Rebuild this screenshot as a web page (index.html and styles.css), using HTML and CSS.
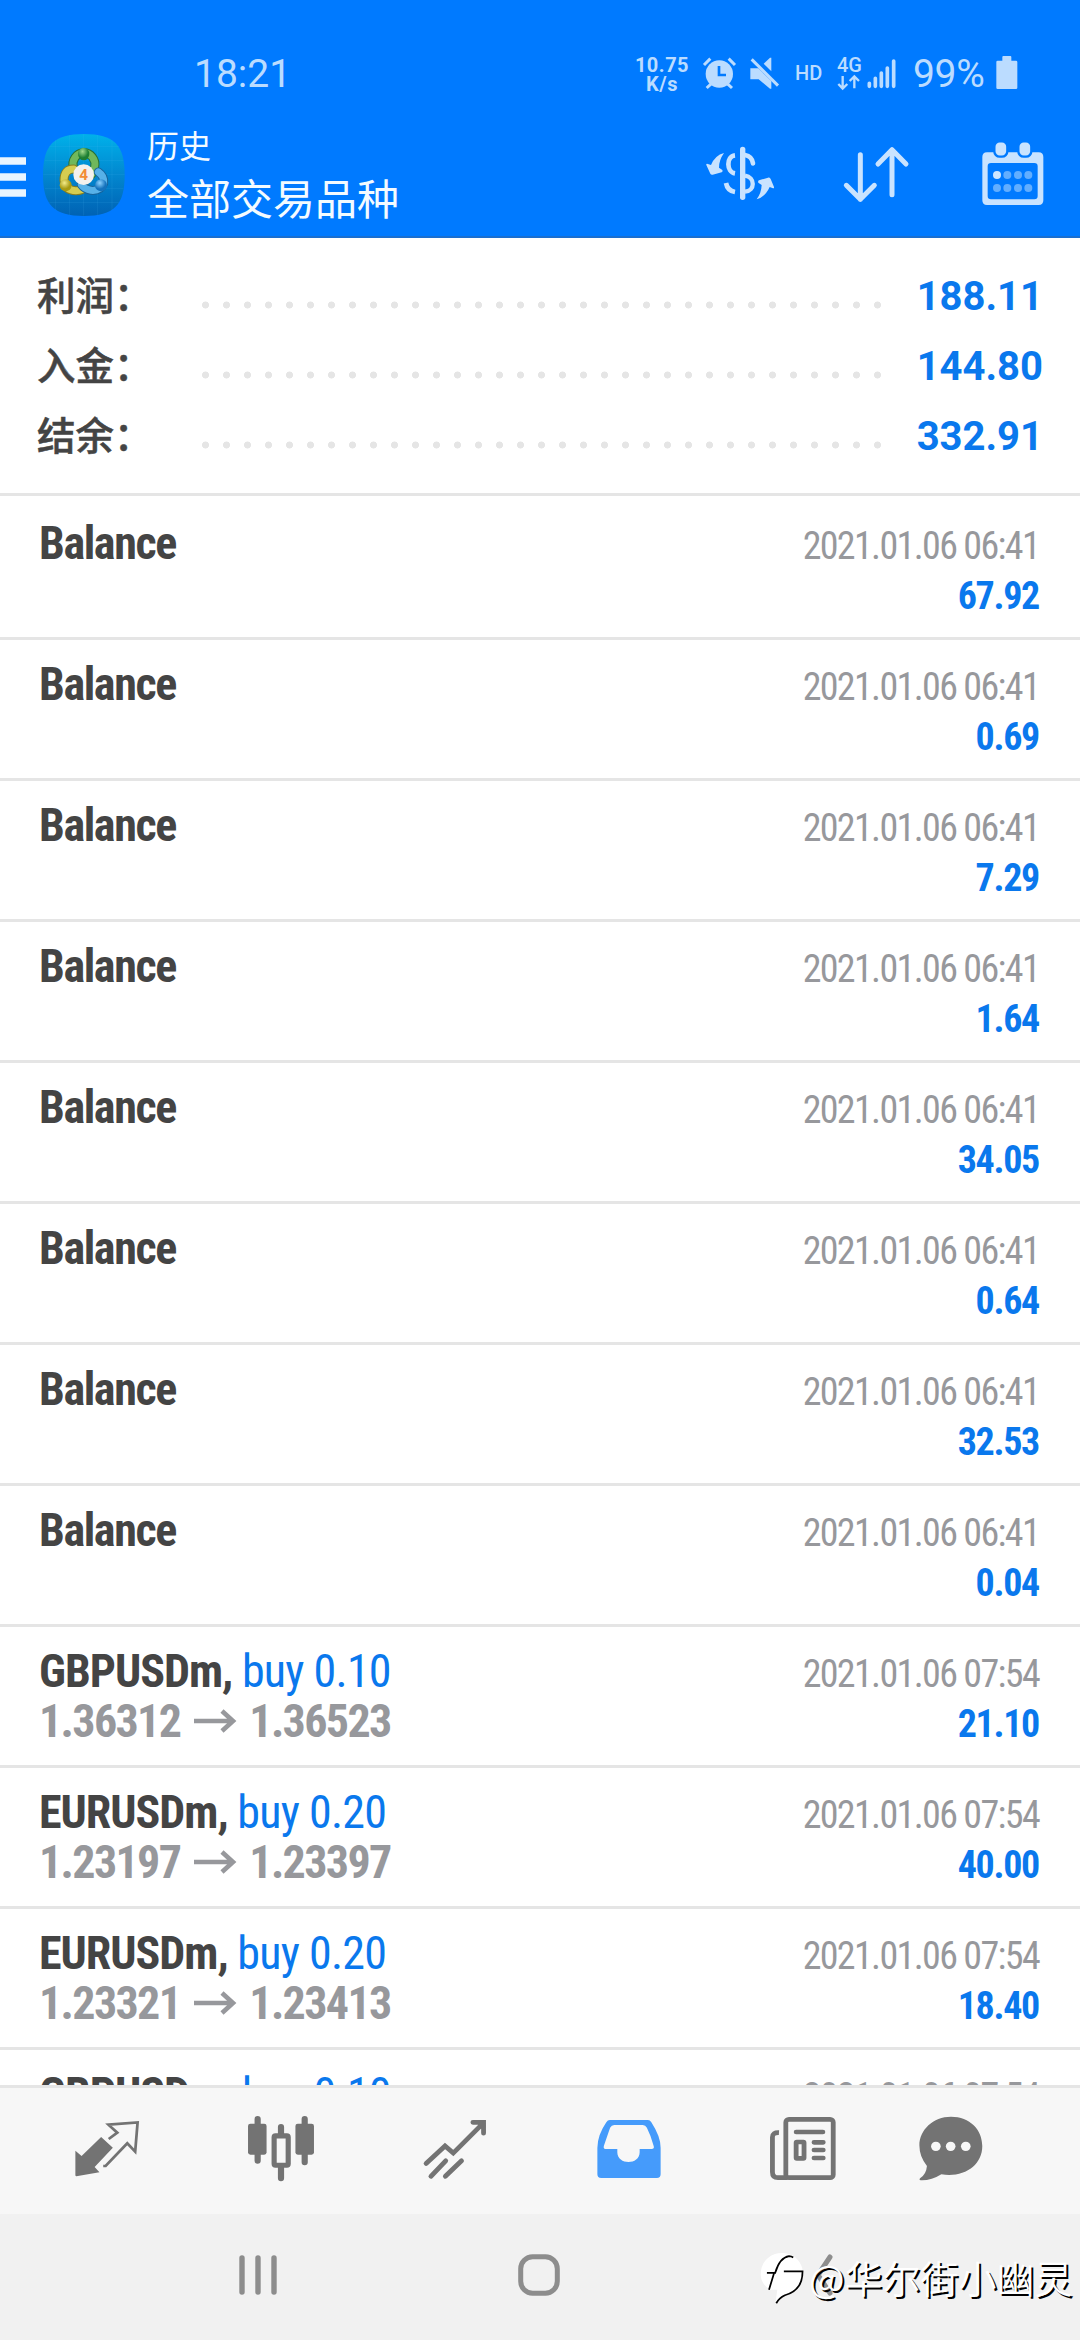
FILE: index.html
```html
<!DOCTYPE html>
<html lang="zh-CN">
<head>
<meta charset="utf-8">
<title>历史</title>
<link rel="stylesheet" href="styles.css">
</head>
<body>
<div class="screen">
  <header class="top">
    <div class="status">
      <span class="clock">18:21</span>
      <div class="indicators">
        <div class="speed"><span>10.75</span><span>K/s</span></div>
        <svg class="alarm" width="34" height="32" viewBox="305 82 102 96"><g fill="none" stroke="#bbdcff" stroke-width="9"><path d="M308 106L327 87M401 106L382 87M331 161L316 175M377 161L392 175"/></g><circle cx="354" cy="133" r="41" fill="#bbdcff"/><path d="M353 109V136H374" fill="none" stroke="#007aff" stroke-width="8"/></svg>
        <svg class="mute" width="30" height="32" viewBox="448 82 90 96"><path d="M449 116H473L512 154V177H508L474 149H449Z" fill="#bbdcff"/><path d="M512 84V125L489 102L508 84Z" fill="#bbdcff"/><path d="M453 89L532 168" stroke="#bbdcff" stroke-width="9"/></svg>
        <span class="hd">HD</span>
        <div class="net"><span>4G</span><svg width="24" height="16" viewBox="713 135 72 48"><path d="M730 138V176M717 162L730 176L744 162M765 175V140M751 153L765 139L779 153" fill="none" stroke="#bbdcff" stroke-width="7"/></svg></div>
        <svg class="signal" width="30" height="30" viewBox="805 88 90 90"><path d="M812 161V170M830 146V170M848 130V170M866 115V170M885 94V170" stroke="#bbdcff" stroke-width="11" stroke-linecap="round"/></svg>
        <span class="pct">99%</span>
        <svg class="battery" width="22" height="34" viewBox="1187 78 66 102"><path d="M1206 81Q1206 78 1209 78H1230Q1233 78 1233 81V92H1247Q1251 92 1251 96V173Q1251 177 1247 177H1192Q1188 177 1188 173V96Q1188 92 1192 92H1206Z" fill="#bbdcff"/></svg>
      </div>
    </div>
    <div class="appbar">
      <svg class="menu" width="26" height="40" viewBox="0 0 26 40"><path d="M0 4H26M0 20H26M0 36H26" stroke="#e9f5ff" stroke-width="7.4"/></svg>
      <svg class="logo" width="84" height="84" viewBox="36 39 252 252">
        <defs>
          <linearGradient id="bg" x1="0" y1="0" x2="0" y2="1"><stop offset="0" stop-color="#00b1ea"/><stop offset=".5" stop-color="#0287cf"/><stop offset="1" stop-color="#0062b4"/></linearGradient>
          <radialGradient id="gn" cx=".4" cy=".3"><stop offset="0" stop-color="#a5dc8c"/><stop offset="1" stop-color="#1d7f32"/></radialGradient>
          <radialGradient id="ye" cx=".4" cy=".3"><stop offset="0" stop-color="#f3eb89"/><stop offset="1" stop-color="#a79a12"/></radialGradient>
          <radialGradient id="bl" cx=".4" cy=".3"><stop offset="0" stop-color="#8dd2ff"/><stop offset="1" stop-color="#1472bd"/></radialGradient>
        </defs>
        <path d="M162 42C252 42 284 74 284 165S252 288 162 288S39 256 39 165S72 42 162 42Z" fill="url(#bg)"/>
        <path d="M77 60V270M119 45V285M161 43V287M203 45V285M246 60V270M58 80H267M44 122H280M40 164H284M44 206H280M58 248H267" stroke="#53baf0" stroke-opacity=".2" stroke-width="2"/>
        <g fill="none" stroke-linecap="round">
          <path d="M130 143A33 35 0 1 1 194 141Q192 156 182 166" stroke="#286f35" stroke-width="27"/>
          <path d="M130 143A33 35 0 1 1 194 141Q192 156 182 166" stroke="#70b85b" stroke-width="21"/>
          <path d="M131 147Q102 147 102 181Q106 212 138 212Q156 212 164 202" stroke="#857d20" stroke-width="27"/>
          <path d="M131 147Q102 147 102 181Q106 212 138 212Q156 212 164 202" stroke="#d6cd50" stroke-width="21"/>
          <path d="M205 156Q224 169 221 190Q212 213 184 211Q163 207 154 194" stroke="#17639a" stroke-width="27"/>
          <path d="M205 156Q224 169 221 190Q212 213 184 211Q163 207 154 194" stroke="#57b1e8" stroke-width="21"/>
        </g>
        <ellipse cx="161" cy="102" rx="17" ry="19" fill="url(#gn)"/><circle cx="107" cy="196" r="18" fill="url(#ye)"/><circle cx="213" cy="196" r="18" fill="url(#bl)"/>
        <circle cx="161" cy="164" r="31" fill="#f4f1ed"/><text x="161" y="181" text-anchor="middle" class="four">4</text>
      </svg>
      <div class="titles"><span class="small">历史</span><span class="large">全部交易品种</span></div>
      <svg class="act currency" width="70" height="56" viewBox="315 348 210 168" fill="none" stroke="#c9e3ff" stroke-width="14">
        <path d="M428 358V502" stroke-width="16" stroke-linecap="round"/><path d="M405 376C378 379 379 426 405 430M378 459Q382 482 405 486"/><path d="M435 375Q456 379 459 400" stroke-linecap="round"/><path d="M435 437C466 442 466 482 435 485" stroke-width="13"/>
        <path d="M372 369Q345 376 333 405L321 401Q318 401 319 405L331 431Q333 435 338 434L365 427Q369 425 367 420L357 413Q357 390 372 369ZM470 508Q496 500 509 471L519 475Q523 475 522 471L512 447Q509 442 504 443L477 451Q473 453 475 458L485 465Q484 489 470 508Z" fill="#c9e3ff" stroke="none"/>
      </svg>
      <svg class="act sort" width="66" height="58" viewBox="729 348 198 174"><path d="M781 374V508M739 466L781 508L823 466M876 494V359M834 402L876 359L918 402" fill="none" stroke="#c9e3ff" stroke-width="15" stroke-linecap="round" stroke-linejoin="round"/></svg>
      <svg class="act" width="62" height="64" viewBox="1145 335 186 192"><path fill-rule="evenodd" d="M1160 366H1315Q1329 366 1329 380V510Q1329 524 1315 524H1160Q1146 524 1146 510V380Q1146 366 1160 366ZM1172 398Q1162 398 1162 408V497Q1162 507 1172 507H1302Q1312 507 1312 497V408Q1312 398 1302 398Z" fill="#c9e3ff"/><g fill="#c9e3ff" stroke="#007aff" stroke-width="7"><rect x="1182" y="333" width="39" height="46" rx="16"/><rect x="1254" y="333" width="39" height="46" rx="16"/></g><g fill="#62aeff"><circle cx="1190" cy="434" r="12" fill="#cee6ff"/><circle cx="1221" cy="434" r="12"/><circle cx="1253" cy="434" r="12"/><circle cx="1284" cy="434" r="12"/><circle cx="1190" cy="473" r="12"/><circle cx="1221" cy="473" r="12"/><circle cx="1253" cy="473" r="12"/><circle cx="1284" cy="473" r="12"/></g></svg>
    </div>
  </header>
  <section class="summary">
    <div class="sum"><span class="key">利润：</span><i class="dots"></i><span class="amount">188.11</span></div>
    <div class="sum"><span class="key">入金：</span><i class="dots"></i><span class="amount">144.80</span></div>
    <div class="sum"><span class="key">结余：</span><i class="dots"></i><span class="amount">332.91</span></div>
  </section>
  <main class="list">
    <article class="row"><div class="left"><span class="name">Balance</span></div><div class="right"><time>2021.01.06 06:41</time><b>67.92</b></div></article>
    <article class="row"><div class="left"><span class="name">Balance</span></div><div class="right"><time>2021.01.06 06:41</time><b>0.69</b></div></article>
    <article class="row"><div class="left"><span class="name">Balance</span></div><div class="right"><time>2021.01.06 06:41</time><b>7.29</b></div></article>
    <article class="row"><div class="left"><span class="name">Balance</span></div><div class="right"><time>2021.01.06 06:41</time><b>1.64</b></div></article>
    <article class="row"><div class="left"><span class="name">Balance</span></div><div class="right"><time>2021.01.06 06:41</time><b>34.05</b></div></article>
    <article class="row"><div class="left"><span class="name">Balance</span></div><div class="right"><time>2021.01.06 06:41</time><b>0.64</b></div></article>
    <article class="row"><div class="left"><span class="name">Balance</span></div><div class="right"><time>2021.01.06 06:41</time><b>32.53</b></div></article>
    <article class="row"><div class="left"><span class="name">Balance</span></div><div class="right"><time>2021.01.06 06:41</time><b>0.04</b></div></article>
    <article class="row"><div class="left"><span class="name trade">GBPUSDm, <em>buy 0.10</em></span><span class="prices">1.36312<svg class="arrow" width="43" height="24" viewBox="0 0 43 24"><path d="M0 12H39M28 2L39 12L28 22" fill="none" stroke="#97989c" stroke-width="4.6"/></svg>1.36523</span></div><div class="right"><time>2021.01.06 07:54</time><b>21.10</b></div></article>
    <article class="row"><div class="left"><span class="name trade">EURUSDm, <em>buy 0.20</em></span><span class="prices">1.23197<svg class="arrow" width="43" height="24" viewBox="0 0 43 24"><path d="M0 12H39M28 2L39 12L28 22" fill="none" stroke="#97989c" stroke-width="4.6"/></svg>1.23397</span></div><div class="right"><time>2021.01.06 07:54</time><b>40.00</b></div></article>
    <article class="row"><div class="left"><span class="name trade">EURUSDm, <em>buy 0.20</em></span><span class="prices">1.23321<svg class="arrow" width="43" height="24" viewBox="0 0 43 24"><path d="M0 12H39M28 2L39 12L28 22" fill="none" stroke="#97989c" stroke-width="4.6"/></svg>1.23413</span></div><div class="right"><time>2021.01.06 07:54</time><b>18.40</b></div></article>
    <article class="row"><div class="left"><span class="name trade">GBPUSDm, <em>buy 0.10</em></span></div><div class="right"><time>2021.01.06 07:54</time></div></article>
  </main>
  <nav class="tabs">
    <svg width="66" height="58" viewBox="217 242 192 174" preserveAspectRatio="none"><path d="M296 293L330 325L277 383L291 399L224 411Q221 411 221 407V334L239 350Z" fill="#737373"/><path d="M318 299L343 280L317 256L402 249L395 337L372 312L309 380H302" fill="none" stroke="#737373" stroke-width="8"/></svg>
    <svg width="68" height="68" viewBox="714 227 198 202" preserveAspectRatio="none"><g stroke="#737373" stroke-width="18" stroke-linecap="round"><path d="M745 239V363M882 239V367M813 263V285M813 384V415"/></g><rect x="717" y="253" width="54" height="92" rx="7" fill="#737373"/><rect x="855" y="253" width="54" height="92" rx="7" fill="#737373"/><rect x="793" y="289" width="41" height="87" rx="4" fill="#f7f7f7" stroke="#737373" stroke-width="15"/></svg>
    <svg width="64" height="60" viewBox="1223 234 186 178" preserveAspectRatio="none"><path d="M1232 366L1287 314L1311 335L1398 246M1246 404L1289 358M1288 404L1335 358M1368 244H1399V276" fill="none" stroke="#737373" stroke-width="14" stroke-linecap="round" stroke-linejoin="miter"/></svg>
    <svg width="66" height="60" viewBox="158 234 192 180" preserveAspectRatio="none"><path fill-rule="evenodd" d="M198 237H309Q315 237 319 244Q346 287 346 320V400Q346 411 335 411H173Q162 411 162 400V320Q163 281 188 244Q192 237 198 237ZM211 252Q203 252 199 260L181 314Q178 324 188 324H220V334C220 373 285 373 285 334V324H320Q328 324 326 316Q318 284 306 260Q302 252 294 252Z" fill="#459bfb"/></svg>
    <svg width="68" height="66" viewBox="661 226 198 198" preserveAspectRatio="none" fill="none" stroke="#737373" stroke-width="14"><rect x="710" y="236" width="138" height="175" rx="9"/><path d="M690 276Q671 275 671 290V394Q671 411 687 411H715"/><path d="M740 274H818M792 305H819M792 328H819M792 352H819" stroke-linecap="round"/><rect x="740" y="304" width="23" height="49" rx="2"/></svg>
    <svg width="66" height="66" viewBox="1098 226 192 198" preserveAspectRatio="none"><path d="M1194 228C1249 228 1285 267 1285 316C1285 374 1232 412 1166 401Q1137 420 1106 419Q1100 418 1104 413Q1122 401 1124 376Q1102 348 1102 314C1102 268 1142 228 1194 228Z" fill="#737373"/><g fill="#f7f7f7"><circle cx="1150" cy="317" r="14"/><circle cx="1193" cy="317" r="14"/><circle cx="1237" cy="317" r="14"/></g></svg>
  </nav>
  <footer class="system">
    <svg width="38" height="40" viewBox="0 0 38 40"><path d="M3 3V37M19 3V37M35 3V37" stroke="#8d8d8d" stroke-width="5.4" stroke-linecap="round"/></svg>
    <svg class="home" width="42" height="42" viewBox="0 0 42 42"><rect x="2.7" y="2.7" width="36.6" height="36.6" rx="12" fill="none" stroke="#8d8d8d" stroke-width="5"/></svg>
    <svg width="24" height="42" viewBox="0 0 24 42"><path d="M17 3L5 21L17 39" fill="none" stroke="#8d8d8d" stroke-width="5" stroke-linecap="round"/></svg>
    <div class="watermark"><svg width="46" height="54" viewBox="640 648 133 156" preserveAspectRatio="none"><path d="M703 651C741 651 765 680 764 712C762 750 738 768 712 773Q695 779 685 794L690 757L672 757C655 750 642 733 642 712C642 680 666 651 703 651Z" fill="#fff"/><path d="M666 757L681 708M660 708H684Q697 664 724 660Q731 660 736 664M709 704H763Q763 759 712 773Q695 781 687 796" fill="none" stroke="#000" stroke-width="5"/></svg><span>@华尔街小幽灵</span></div>
  </footer>
</div>
</body>
</html>
```
FILE: styles.css
```css
* { box-sizing: border-box; }
body { margin: 0; background: #fff; font-family: Roboto, "Noto Sans CJK SC", sans-serif; }
svg { display: block; flex: none; overflow: visible; }
.screen { width: 1080px; height: 2340px; display: flex; flex-direction: column; overflow: hidden; }

.top { height: 238px; flex: none; background: #007aff; border-bottom: 2px solid #1a6fd0; }
.status { height: 118px; padding: 56px 62px 0 194px; display: flex; justify-content: space-between; align-items: flex-start; color: #bbdcff; }
.clock, .pct { font-size: 39px; line-height: 37px; }
.indicators { display: flex; align-items: flex-start; }
.speed { display: flex; flex-direction: column; align-items: center; width: 56px; font-size: 20px; line-height: 19px; font-weight: 700; letter-spacing: .5px; }
.alarm { margin: 1px 0 0 13px; }
.mute { margin: 1px 0 0 13px; }
.hd { width: 28px; margin: 7px 0 0 15px; font-size: 20px; line-height: 20px; font-weight: 500; }
.net { width: 26px; margin-left: 14px; font-size: 20px; line-height: 19px; font-weight: 500; }
.signal { margin: 3px 0 0 4px; }
.pct { width: 72px; margin-left: 16px; letter-spacing: -.3px; }
.battery { margin-left: 11px; }
.appbar { height: 118px; display: flex; align-items: flex-start; }
.menu { margin-top: 39px; }
.logo { margin: 15px 0 0 16px; }
.four { font: 700 46px Roboto, sans-serif; fill: #f28d35; }
.titles { display: flex; flex-direction: column; margin: 6px auto 0 21px; color: #f4fbff; font-family: "Noto Sans CJK SC", sans-serif; }
.small { font-size: 32px; line-height: 40px; }
.large { font-size: 42px; line-height: 50px; margin-top: 8px; }
.act { margin: 24px 36px 0 0; }
.currency { margin: 28px 68px 0 0; }
.sort { margin: 28px 73px 0 0; }

.summary { height: 258px; flex: none; padding: 22px 37px 0; border-bottom: 3px solid #e5e5e5; }
.sum { height: 70px; display: flex; align-items: center; }
.key { width: 165px; margin-top: -4px; color: #444; font: 500 38.5px "Noto Sans CJK SC", sans-serif; -webkit-text-stroke: .5px #444; white-space: nowrap; }
.dots { width: 693px; height: 8px; margin-top: 19px; background: radial-gradient(circle at 3.5px 4px, #e5e5e5 3.2px, transparent 3.8px) 0 0 / 21px 8px repeat-x; }
.amount { margin: 3px 0 0 auto; color: #0a78ed; font-size: 40px; font-weight: 700; line-height: 48px; }

.list { height: 1589px; flex: none; padding-top: 3px; overflow: hidden; font-family: "Roboto Condensed", Roboto, sans-serif; font-stretch: 75%; }
.row { height: 141px; display: flex; justify-content: space-between; padding: 19px 42px 0 39px; border-bottom: 3px solid #e5e5e5; white-space: nowrap; }
.left, .right { display: flex; flex-direction: column; }
.right { align-items: flex-end; }
.name { color: #444; font-size: 46px; font-weight: 700; line-height: 50px; letter-spacing: -1.4px; }
.trade { letter-spacing: -1px; }
.name em { color: #0a78ed; font-style: normal; font-weight: 400; letter-spacing: -.75px; }
.prices { display: flex; align-items: center; color: #97989c; font-size: 46px; font-weight: 700; line-height: 50px; letter-spacing: -1.65px; }
.arrow { margin: 0 12px 0 14px; }
.right time { color: #97989c; font-size: 38px; line-height: 50px; margin: 3px -1px 0 0; letter-spacing: -1.65px; }
.right b { color: #0a78ed; font-size: 38px; line-height: 50px; letter-spacing: -1.3px; margin-right: -1px; }

.tabs { height: 129px; flex: none; border-top: 3px solid #e5e5e5; background: #f7f7f7; padding: 0 0 5px 20px; display: grid; grid-template-columns: repeat(5, 174px) 122px; align-items: center; justify-items: center; }
.system { position: relative; height: 126px; flex: none; background: #f1f1f1; display: flex; align-items: center; padding: 0 0 5px 239px; }
.home { margin: 0 253px 0 241px; }
.watermark { position: absolute; left: 760px; top: 38px; display: flex; color: #fff; font: 350 38px/50px "Noto Sans CJK SC", sans-serif; text-shadow: 2px 2px 0 #000; white-space: nowrap; }
.watermark span { margin-left: 3px; }
```
